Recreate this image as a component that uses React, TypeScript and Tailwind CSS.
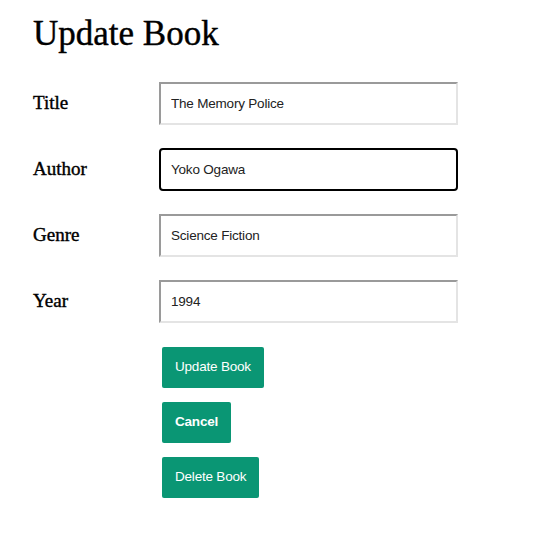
import { useState } from "react";

const serif = "font-['Liberation_Serif','Times_New_Roman',serif] [-webkit-text-stroke:0.4px_black]";
const sans = "font-['Liberation_Sans',Arial,sans-serif]";

export default function App() {
  const [title, setTitle] = useState("The Memory Police");
  const [author, setAuthor] = useState("Yoko Ogawa");
  const [genre, setGenre] = useState("Science Fiction");
  const [year, setYear] = useState("1994");

  const inputCls = `w-[299px] h-[43px] px-[10px] text-[13.5px] tracking-[-0.2px] text-[#222] ${sans} bg-white border-2 border-t-[#9a9a9a] border-l-[#9a9a9a] border-b-[#e4e4e4] border-r-[#e4e4e4] outline-none`;
  const focusCls = `w-[299px] h-[43px] px-[10px] text-[13.5px] tracking-[-0.2px] text-[#222] ${sans} bg-white border-2 border-black rounded-[4px] outline-none`;

  const rows = [
    { label: "Title", value: title, set: setTitle, focused: false },
    { label: "Author", value: author, set: setAuthor, focused: true },
    { label: "Genre", value: genre, set: setGenre, focused: false },
    { label: "Year", value: year, set: setYear, focused: false },
  ];

  return (
    <div className="min-h-screen w-full bg-white px-[33px] pt-[14px]">
      <h1 className={`${serif} text-[35px] leading-[40px] text-black`}>Update Book</h1>

      <form className="mt-[28px] flex flex-col gap-[23px]">
        {rows.map((r) => (
          <div key={r.label} className="flex items-center">
            <label className={`${serif} w-[126px] text-[19px] text-black`}>{r.label}</label>
            <input
              className={r.focused ? focusCls : inputCls}
              value={r.value}
              onChange={(e) => r.set(e.target.value)}
            />
          </div>
        ))}

        <div className={`ml-[129px] flex flex-col items-start gap-[14px] ${sans} text-[13.5px] tracking-[-0.2px] text-white`}>
          <button type="button" className="h-[41px] px-[13px] bg-[#0a9674] rounded-[2px] mt-[1px]">
            Update Book
          </button>
          <button type="button" className="h-[41px] px-[13px] bg-[#0a9674] rounded-[2px] font-bold">
            Cancel
          </button>
          <button type="button" className="h-[41px] px-[13px] bg-[#0a9674] rounded-[2px]">
            Delete Book
          </button>
        </div>
      </form>
    </div>
  );
}
